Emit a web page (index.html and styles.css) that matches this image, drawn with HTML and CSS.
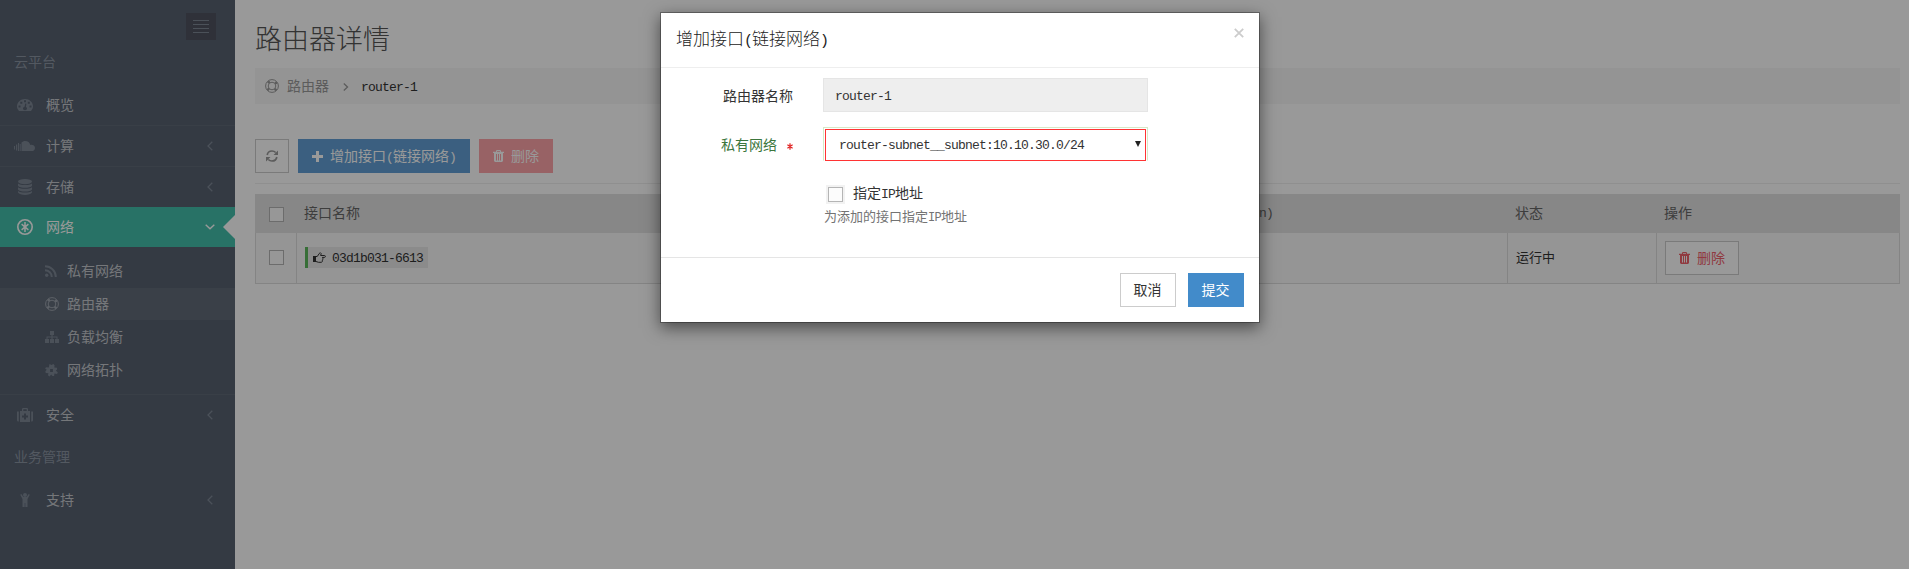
FILE: index.html
```html
<!DOCTYPE html>
<html lang="zh-CN">
<head>
<meta charset="utf-8">
<title>路由器详情</title>
<link rel="stylesheet" href="styles.css">
</head>
<body>
<svg class="defs" width="0" height="0">
  <defs>
    <symbol id="i-dash" viewBox="0 0 16 12"><path fill-rule="evenodd" d="M2 12C.7 10.6 0 9.300 0 7.600 0 3.300 3.500 0 8 0s8 3.300 8 7.600c0 1.700-.7 3-2 4.400zM7 1.200v2h2v-2zM3.300 2.800v2h2v-2zM10.800 2.800v2h2v-2zM1.500 6.600v2h2v-2zM12.500 6.600v2h2v-2zM8.200 4.500 7.600 7.700C6.500 8 6 8.700 6 9.500c0 1 .9 1.700 2 1.700s2-.8 2-1.700c0-.8-.5-1.300-1.100-1.600L9.400 4.700z"/></symbol>
    <symbol id="i-cloud" viewBox="0 0 21 10"><path d="M0 5h1v3.500H0zM2 3.500h1.200V9.500H2zM4 2h1v8H4zM5.700 3h1v7h-1zM7.500 1.500C8.500.6 9.700 0 11.200 0c2.600 0 4.600 1.700 5 3.900 2.500-.5 4.800.8 4.800 3 0 1.900-1.400 3.100-3.200 3.100H7.500z"/></symbol>
    <symbol id="i-db" viewBox="0 0 14 16"><ellipse cx="7" cy="2.600" rx="7" ry="2.600"/><path d="M0 4.500c2.500 2 11.500 2 14 0v2.300c-1.500 2.700-12.500 2.700-14 0zM0 8.300c2.500 2 11.500 2 14 0v2.100c-1.500 2.700-12.500 2.700-14 0zM0 12c2.500 2 11.500 2 14 0v1.500c-1.500 3.300-12.500 3.300-14 0z"/></symbol>
    <symbol id="i-net" viewBox="0 0 16 16"><circle cx="8" cy="8" r="7.200" fill="none" stroke="currentColor" stroke-width="1.600"/><path d="M8 3v10M4.600 5.200l6.800 5.600M11.400 5.200l-6.800 5.600" fill="none" stroke="currentColor" stroke-width="1.500"/></symbol>
    <symbol id="i-rss" viewBox="0 0 12 12"><circle cx="1.700" cy="10.300" r="1.700"/><path d="M0 5.200a6.800 6.800 0 0 1 6.800 6.800M0 1.200A10.800 10.800 0 0 1 10.800 12" fill="none" stroke="currentColor" stroke-width="2"/></symbol>
    <symbol id="i-ring" viewBox="0 0 14 14"><g fill="none" stroke="currentColor"><circle cx="7" cy="7" r="6.400"/><circle cx="7" cy="7" r="3.800"/><circle cx="7" cy="7" r="5" stroke-width="2.400" stroke-dasharray="2.200 5.650" stroke-dashoffset="-2.820"/></g></symbol>
    <symbol id="i-site" viewBox="0 0 14 12"><path d="M5 0h4v4H7.600v1.500h4.900V8H14v4h-4V8h1.500V6.500H7.600V8H9v4H5V8h1.400V6.500H2.500V8H4v4H0V8h1.500V5.500h4.900V4H5z"/></symbol>
    <symbol id="i-gear" viewBox="0 0 14 14"><path fill-rule="evenodd" d="M4.800 0 7 1l2-1 1.300 1.300-.3 2.400 3 .4v1.800l-1.300 1.400L13.800 9l-.8 1.700-2.800-.4-.4 2.700H8l-1.300-1.600L4.800 13.500 3.200 12.200l.5-2.200L.8 9.700.4 7.800l1.500-1.500L.2 5 1 3.500l3.100.2zM5.500 5.500v3h3v-3z"/></symbol>
    <symbol id="i-med" viewBox="0 0 16 14"><path fill-rule="evenodd" d="M0 3.500h1.800v10H1.300A1.300 1.300 0 0 1 0 12.200zM14.200 3.500H16v8.700a1.300 1.300 0 0 1-1.300 1.300h-.5zM3 3h2V.8L5.800 0h4.400l.8.800V3h2v11H3zM6.300 1.200V3h3.400V1.200zM7 5.500v2H5v2h2v2h2v-2h2v-2H9v-2z"/></symbol>
    <symbol id="i-person" viewBox="0 0 10 14"><circle cx="5" cy="2" r="2"/><path d="M.2 1.700 1.300 1l2.200 3h3l2.200-3 1.100.7L7.500 6v8H5.300v-4h-.6v4H2.500V6z"/></symbol>
    <symbol id="i-left" viewBox="0 0 6 10"><path d="M5.300.7 1 5l4.300 4.300" fill="none" stroke="currentColor" stroke-width="1.300"/></symbol>
    <symbol id="i-right" viewBox="0 0 6 8"><path d="M.8.6 4.500 4 .8 7.400" fill="none" stroke="currentColor" stroke-width="1.300"/></symbol>
    <symbol id="i-down" viewBox="0 0 10 6"><path d="M.7.7 5 4.700 9.300.7" fill="none" stroke="currentColor" stroke-width="1.400"/></symbol>
    <symbol id="i-sync" viewBox="0 0 12 12"><path d="M1.200 5C1.600 2.500 3.600 1 6 1c1.500 0 2.700.5 3.700 1.500M10.800 7c-.4 2.500-2.400 4-4.800 4-1.500 0-2.700-.5-3.700-1.500" fill="none" stroke="currentColor" stroke-width="1.700"/><path d="M12 .5V5H7.500zM0 11.500V7h4.500z"/></symbol>
    <symbol id="i-plus" viewBox="0 0 11 11"><path d="M4 0h3v4h4v3H7v4H4V7H0V4h4z"/></symbol>
    <symbol id="i-trash" viewBox="0 0 11 12"><path fill-rule="evenodd" d="M3 1.800V.8L3.800 0h3.400L8 .8v1H11V3h-1v8l-1 1H2l-1-1V3H0V1.800zM4 1v.8h3V1zM3 4v6.500h1V4zM5 4v6.500h1V4zM7 4v6.500h1V4z"/></symbol>
    <symbol id="i-hand" viewBox="0 0 13 11"><path d="M0 4h3v6H0z"/><path d="M3 4.500h1.200L6.300 1.500 7.300.7l.9.900-.6 1.900h4c1 0 1 1.900 0 1.900H9.300c1 .2.900 1.600.1 1.700.7.300.5 1.500-.3 1.600.5.600.1 1.600-.9 1.600H5.500L3 9.500" fill="none" stroke="currentColor" stroke-width="1"/></symbol>
  </defs>
</svg>

<div class="page">
  <aside class="sidebar">
    <div class="side-top"><div class="toggler"><i></i><i></i><i></i><i></i></div></div>
    <div class="heading">云平台</div>
    <nav>
      <div class="item"><span class="ico"><svg width="16" height="12"><use href="#i-dash"/></svg></span><span class="t">概览</span></div>
      <div class="item"><span class="ico"><svg width="21" height="10"><use href="#i-cloud"/></svg></span><span class="t">计算</span><svg class="arrow" width="6" height="10"><use href="#i-left"/></svg></div>
      <div class="item last"><span class="ico"><svg width="14" height="16"><use href="#i-db"/></svg></span><span class="t">存储</span><svg class="arrow" width="6" height="10"><use href="#i-left"/></svg></div>
      <div class="item active"><span class="ico"><svg width="16" height="16"><use href="#i-net"/></svg></span><span class="t">网络</span><svg class="arrow" width="10" height="6"><use href="#i-down"/></svg></div>
      <div class="sub">
        <div class="subitem"><span class="sico"><svg width="12" height="12"><use href="#i-rss"/></svg></span><span class="t">私有网络</span></div>
        <div class="subitem current"><span class="sico"><svg width="14" height="14"><use href="#i-ring"/></svg></span><span class="t">路由器</span></div>
        <div class="subitem"><span class="sico"><svg width="14" height="12"><use href="#i-site"/></svg></span><span class="t">负载均衡</span></div>
        <div class="subitem"><span class="sico"><svg width="13" height="13"><use href="#i-gear"/></svg></span><span class="t">网络拓扑</span></div>
      </div>
      <div class="item last"><span class="ico"><svg width="16" height="14"><use href="#i-med"/></svg></span><span class="t">安全</span><svg class="arrow" width="6" height="10"><use href="#i-left"/></svg></div>
      <div class="heading">业务管理</div>
      <div class="item last"><span class="ico"><svg width="10" height="14"><use href="#i-person"/></svg></span><span class="t">支持</span><svg class="arrow" width="6" height="10"><use href="#i-left"/></svg></div>
    </nav>
  </aside>

  <main class="main">
    <h1>路由器详情</h1>
    <div class="crumb"><svg width="14" height="14"><use href="#i-ring"/></svg><span class="c-link">路由器</span><svg class="c-sep" width="6" height="8"><use href="#i-right"/></svg><span class="lat">router-1</span></div>
    <div class="tools">
      <div class="btn refresh"><svg width="12" height="12"><use href="#i-sync"/></svg></div>
      <div class="btn blue"><svg width="11" height="11"><use href="#i-plus"/></svg><span class="t">增加接口<b>(</b>链接网络<b>)</b></span></div>
      <div class="btn red"><svg width="11" height="12"><use href="#i-trash"/></svg><span class="t">删除</span></div>
    </div>
    <div class="table">
      <div class="tr th"><div><span class="box"></span></div><div><span class="t">接口名称</span></div><div class="mtu"><span class="lat">n)</span></div><div><span class="t">状态</span></div><div><span class="t">操作</span></div></div>
      <div class="tr td"><div><span class="box"></span></div><div><span class="tag"><svg width="13" height="11"><use href="#i-hand"/></svg><span class="lat">03d1b031-6613</span></span></div><div></div><div class="small"><span class="t">运行中</span></div><div><div class="btn del"><svg width="11" height="12"><use href="#i-trash"/></svg><span class="t">删除</span></div></div></div>
    </div>
  </main>
</div>

<div class="backdrop">
  <div class="modal">
    <div class="m-head"><span>增加接口<b>(</b>链接网络<b>)</b></span><svg class="close" width="10" height="10" viewBox="0 0 10 10"><path d="M.8.8l8.400 8.400M9.200.8.8 9.200"/></svg></div>
    <div class="m-body">
      <div class="row"><label>路由器名称</label><div class="field ro"><span class="lat">router-1</span></div></div>
      <div class="row second"><label class="ok">私有网络<svg class="req" width="6" height="7" viewBox="0 0 6 7"><path d="M3 .3v6.400M.4 1.800l5.200 3.400M5.600 1.800.4 5.200"/></svg></label><div class="field sel"><div class="ring"><span class="lat">router-subnet__subnet:10.10.30.0/24</span><i class="caret"></i></div></div></div>
      <div class="check"><span class="halo"><span class="box"></span></span><span class="t">指定<b>I</b><b>P</b>地址</span></div>
      <div class="help">为添加的接口指定<b>I</b><b>P</b>地址</div>
    </div>
    <div class="m-foot"><div class="btn cancel"><span class="t">取消</span></div><div class="btn submit"><span class="t">提交</span></div></div>
  </div>
</div>
</body>
</html>
```
FILE: styles.css
```css
* { box-sizing: border-box; }
body { margin: 0; width: 1909px; height: 569px; overflow: hidden; background: #fff; color: #333; font: 400 14px/20px "Noto Sans CJK SC", sans-serif; }
.defs { position: absolute; }
svg { display: block; flex: none; fill: currentColor; }
b { display: inline-block; width: 7px; font: 13px/1 "Liberation Mono", monospace; text-align: center; }
.t { margin: -2px 0 0 -1px; }
.lat { font: 13px/20px "Liberation Mono", monospace; letter-spacing: -.8px; white-space: nowrap; }
.page { display: flex; height: 569px; }

.sidebar { width: 235px; background: #576170; color: #c4c7cc; }
.side-top { height: 40px; padding: 13px 19px 0 0; display: flex; justify-content: flex-end; }
.toggler { width: 30px; height: 27px; background: #4f535f; padding: 7px; display: flex; flex-direction: column; gap: 3px; }
.toggler i { height: 1px; background: #7e8794; }
.heading { height: 45px; padding: 11px 14px; color: #8b94a2; }
.item { height: 41px; display: flex; align-items: center; padding: 0 22px 1px 15px; border-bottom: 1px solid #606a77; }
.item.last { border-bottom: 0; height: 40px; padding-bottom: 0; }
.ico { width: 21px; margin: 0 11px 0 -1px; display: flex; justify-content: center; color: #7d8795; }
.ico + .t { flex: 1; margin-left: 0; }
.arrow { color: #7d8795; }
.item.active { height: 40px; border: 0; background: #44bfaa; color: #fff; padding: 0 0 0 15px; }
.active .ico, .active .arrow { color: #fff; }
.item.active::after { content: ""; margin-left: 8px; border: 12px solid transparent; border-left: 0; border-right-color: #fff; }
.sub { padding: 8px 0; border-bottom: 1px solid #606a77; display: flex; flex-direction: column; gap: 1px; }
.subitem { height: 32px; display: flex; align-items: center; padding-left: 45px; }
.sico { width: 14px; margin-right: 9px; color: #7d8795; }
.current { background: #616b78; }
.current .sico { color: #9ca3ad; }

.main { flex: 1; padding: 18px 9px 0 20px; }
h1 { margin: 0; height: 50px; font: 300 27px/40px "Noto Sans CJK SC", sans-serif; color: #555; }
.crumb { height: 36px; background: #f7f7f7; display: flex; align-items: center; padding-left: 10px; color: #999; }
.c-link { margin: -2px 14px 0 8px; }
.c-sep { margin: 1px 13px 0 0; }
.crumb .lat { color: #333; margin: 3px 0 0 -1px; }
.tools { margin-top: 35px; height: 45px; display: flex; gap: 9px; border-bottom: 1px solid #eee; }
.btn { height: 34px; display: flex; align-items: center; justify-content: center; gap: 8px; color: #fff; }
.refresh { width: 34px; border: 1px solid #ccc; color: #999; }
.blue { width: 172px; background: #639fd5; }
.red { width: 74px; background: #fda3a8; }
.table { margin-top: 10px; border: 1px solid #ddd; border-top: 0; }
.tr { display: grid; grid-template-columns: 41px 900px 311px 149px 1fr; }
.tr > div { display: flex; align-items: center; padding-left: 8px; }
.tr > div:first-child { padding: 0 0 0 13px; }
.th { height: 39px; margin: 0 -1px; padding: 0 1px; background: #e1e1e1; color: #666; }
.th .box { margin-top: 2px; }
.th .t { margin-top: -3px; }
.mtu { padding-left: 62px !important; }
.td { height: 50px; background: #f9f9f9; }
.td > div { border-left: 1px solid #ddd; }
.td > div:first-child, .td > div:nth-child(3) { border-left: 0; }
.td > div:nth-child(n+4), .td > div:nth-child(2) { margin-left: -1px; }
.td .box { margin-top: -1px; }
.box { display: block; width: 15px; height: 15px; border: 1px solid #b5b5b5; background: #fcfcfc; }
.tag { display: flex; align-items: center; gap: 6px; height: 21px; width: 123px; margin-top: -1px; padding-left: 5px; border-left: 3px solid #5cb85c; background: #e8e8e8; color: #333; }
.tag .lat { margin-top: 2px; }
.small { font-size: 13px; }
.small .t { margin: -3px 0 0; }
.del { width: 74px; border: 1px solid #ccc; background: #fff; color: #f0616c; }

.backdrop { position: absolute; inset: 0; background: rgba(0,0,0,.4); }
.modal { position: absolute; left: 660px; top: 12px; width: 600px; height: 311px; background: #fff; background-clip: padding-box; border: 1px solid rgba(0,0,0,.3); box-shadow: 0 5px 15px rgba(0,0,0,.5); }
.m-head { height: 55px; padding: 15px 15px 0; display: flex; justify-content: space-between; font-size: 17px; font-weight: 300; color: #222; border-bottom: 1px solid #eee; }
.m-head b { font-size: 15px; width: 8px; }
.close { fill: none; stroke: #ccc; stroke-width: 1.800; }
.m-body { height: 189px; padding-top: 10px; }
.row { display: flex; }
.row label { width: 162px; padding: 7px 30px 0 0; display: flex; justify-content: flex-end; }
.row.second { margin-top: 15px; }
.ok { color: #3c763d; }
.req { margin: 9px 0 0 10px; fill: none; stroke: #e02222; stroke-width: 1.200; }
.field { width: 325px; height: 34px; border: 1px solid #e5e5e5; }
.ro { background: #eee; padding: 5px 0 0 11px; }
.sel { border-color: #d6e9c6; border-bottom-color: transparent; padding: 1px; }
.ring { height: 32px; border: 1px solid #f33; padding: 6px 4px 0 13px; display: flex; justify-content: space-between; }
.caret { margin-top: 5px; border: 3px solid transparent; border-top: 6px solid #222; height: 0; }
.check { margin: 24px 0 0 165px; height: 19px; display: flex; align-items: center; gap: 9px; }
.check .t { margin-top: -5px; }
.halo { padding: 2px; background: #f2f2f2; }
.help { margin: 3px 0 0 163px; font-size: 13px; line-height: 18px; color: #737373; }
.help b { width: 6.500px; font-size: 12px; }
.m-foot { height: 65px; border-top: 1px solid #e5e5e5; padding: 15px 15px 0 0; display: flex; justify-content: flex-end; gap: 12px; }
.m-foot .btn { width: 56px; }
.cancel { border: 1px solid #ccc; color: #333; }
.submit { background: #428bca; }
```
